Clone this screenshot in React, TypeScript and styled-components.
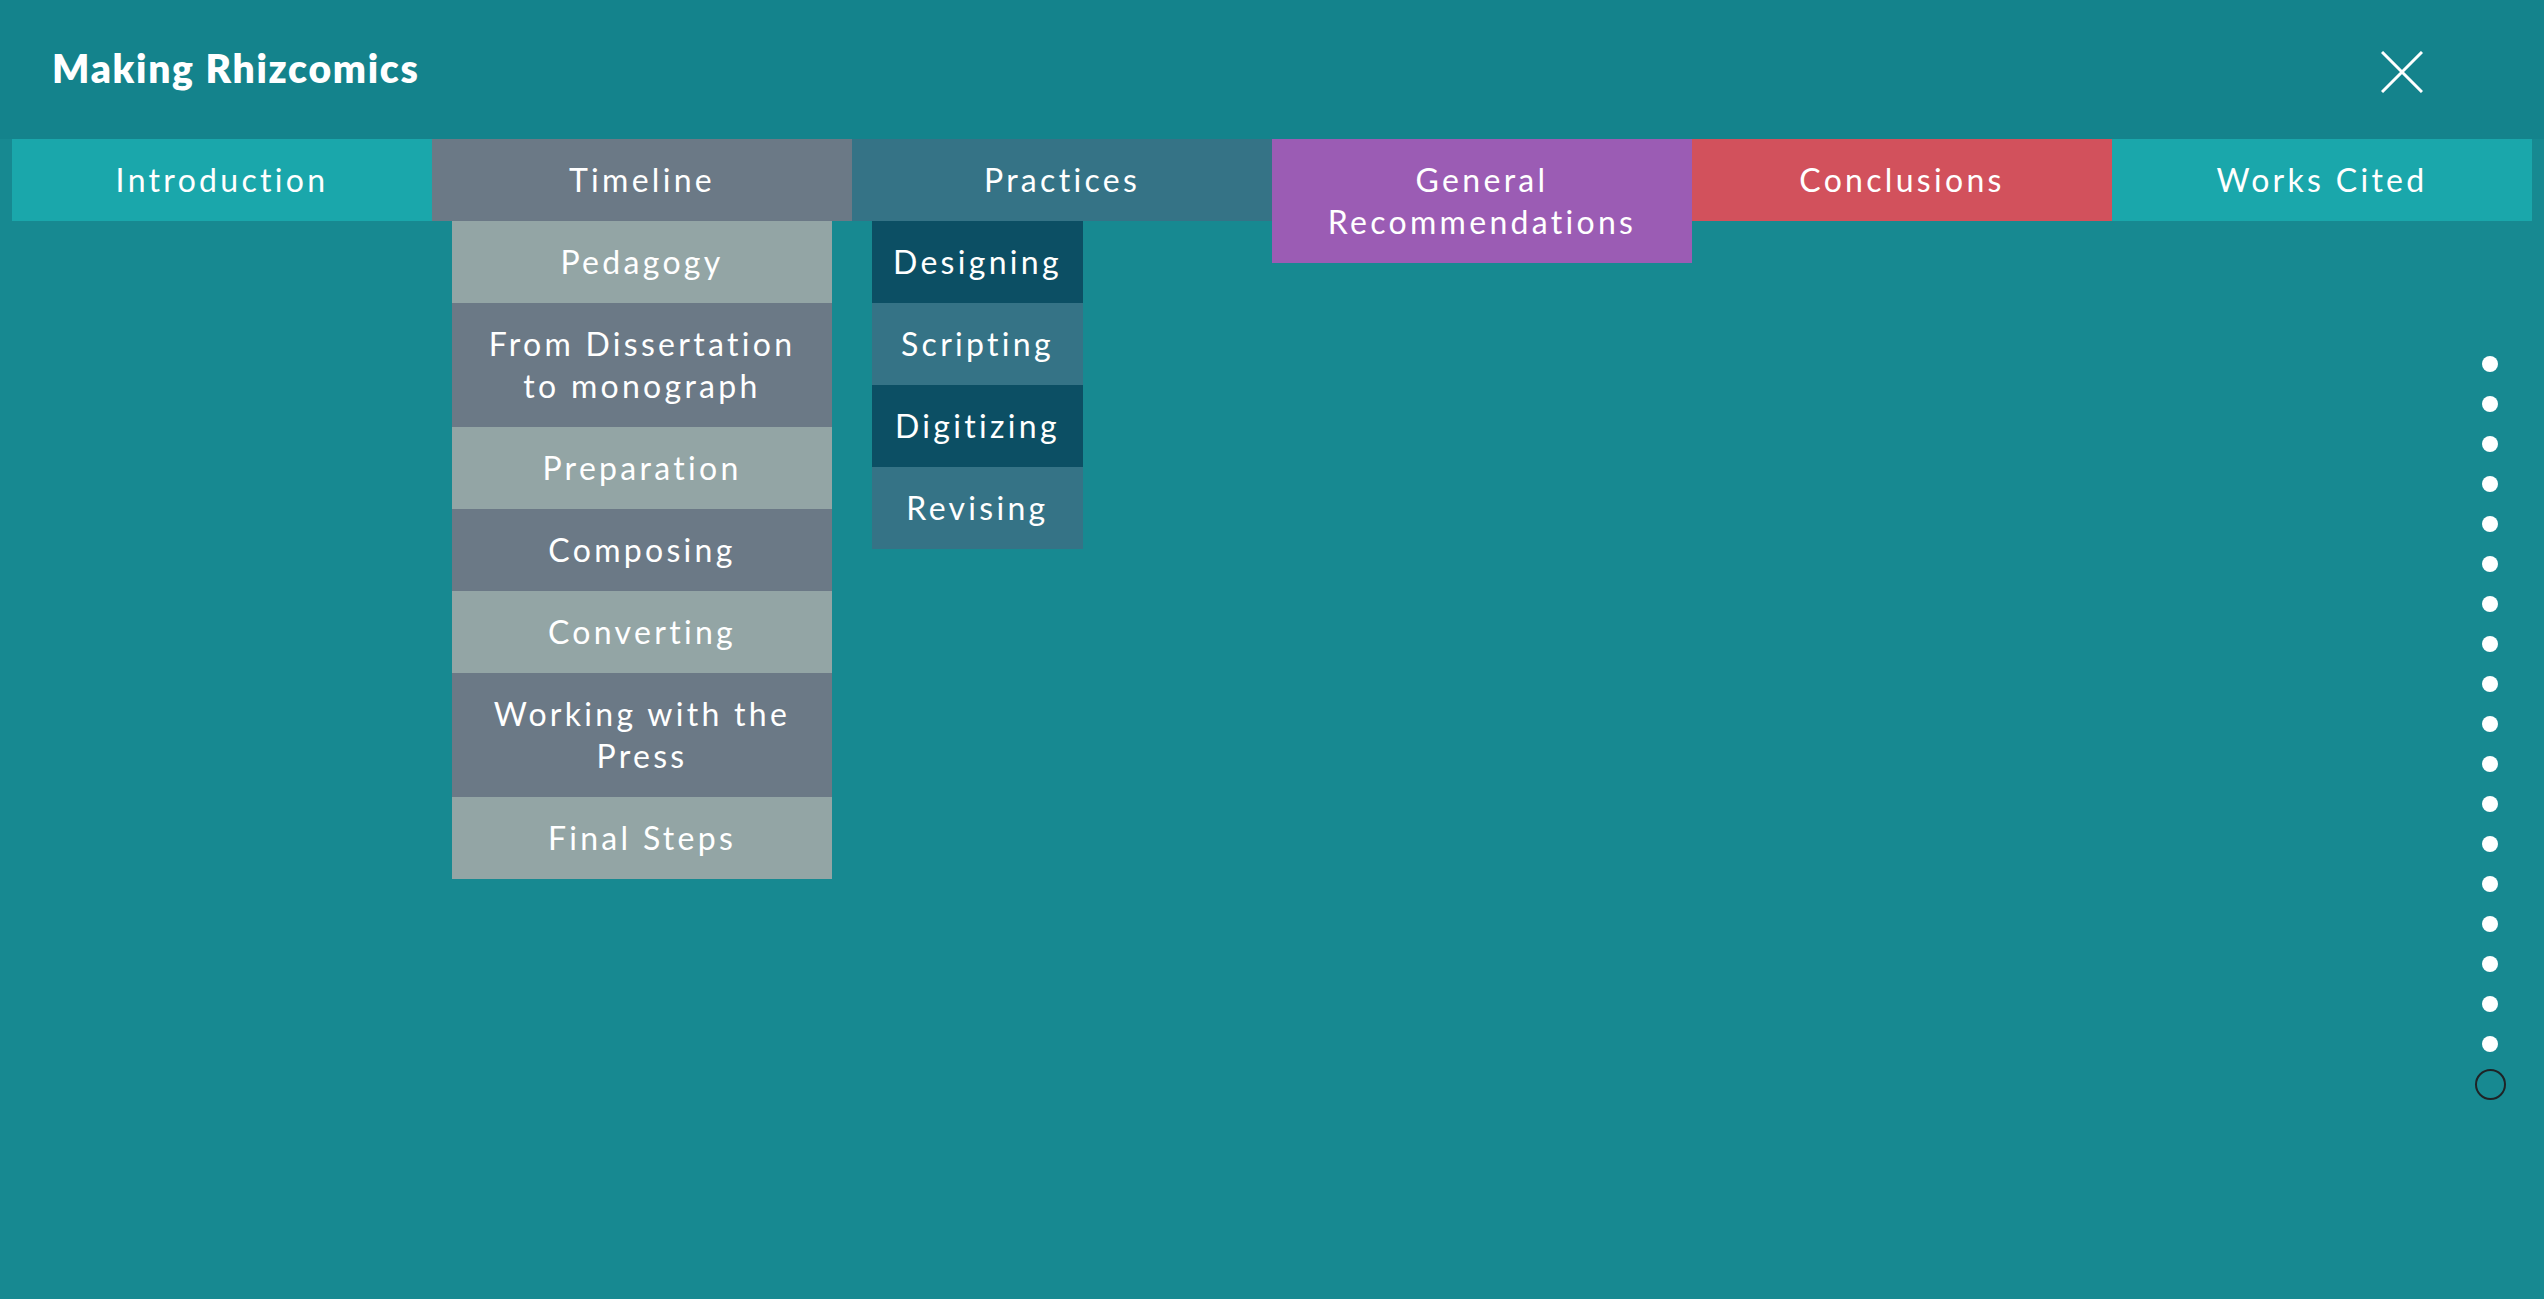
import styled, { createGlobalStyle } from 'styled-components';

const GlobalStyle = createGlobalStyle`
  html, body {
    margin: 0;
    padding: 0;
    background-color: #178991;
  }
  body {
    font-family: Lato, "Open Sans", sans-serif;
    color: #ffffff;
  }
`;

const S = {
  Page: styled.div`
    min-height: 100vh;
    background-color: #178991;
  `,
  Header: styled.header`
    height: 139px;
    background-color: #14838c;
    display: flex;
    align-items: center;
    justify-content: space-between;
    padding: 0 121px 0 52px;
    box-sizing: border-box;
  `,
  Title: styled.h1`
    margin: 0 0 4px;
    font-size: 39px;
    font-weight: 800;
    letter-spacing: 1.7px;
  `,
  Close: styled.button`
    width: 42px;
    height: 42px;
    padding: 0;
    margin-top: 4px;
    border: none;
    background: none;
    cursor: pointer;
    display: flex;
  `,
  Nav: styled.nav`
    display: grid;
    grid-template-columns: repeat(6, 1fr);
    align-items: start;
    padding: 0 12px;
  `,
  Column: styled.div`
    display: flex;
    flex-direction: column;
    align-items: stretch;
  `,
  Tab: styled.a<{ $bg: string }>`
    display: block;
    background-color: ${p => p.$bg};
    padding: 20px;
    font-size: 32px;
    line-height: 42px;
    letter-spacing: 3.3px;
    text-align: center;
    color: #ffffff;
    text-decoration: none;
  `,
  Menu: styled.ul<{ $fit?: boolean }>`
    list-style: none;
    margin: 0 20px;
    padding: 0;
    align-self: ${p => (p.$fit ? 'flex-start' : 'stretch')};
  `,
  MenuItem: styled.li<{ $bg: string }>`
    background-color: ${p => p.$bg};
    padding: 20px 21px;
    font-size: 32px;
    line-height: 42px;
    letter-spacing: 3.3px;
    text-align: center;
    color: #ffffff;
  `,
  Pager: styled.div`
    position: fixed;
    top: 344px;
    right: 38px;
    width: 32px;
    display: flex;
    flex-direction: column;
  `,
  PagerCell: styled.div`
    height: 40px;
    display: flex;
    align-items: center;
    justify-content: center;
  `,
  Dot: styled.span<{ $current?: boolean }>`
    box-sizing: border-box;
    border-radius: 50%;
    width: ${p => (p.$current ? '31px' : '16px')};
    height: ${p => (p.$current ? '31px' : '16px')};
    background-color: ${p => (p.$current ? 'transparent' : '#ffffff')};
    border: ${p => (p.$current ? '2px solid #1f2326' : 'none')};
  `
};

type Sub = { label: string; bg: string };
type Section = { label: string; bg: string; sub?: Sub[]; fit?: boolean };

const light = '#93a5a5';
const slate = '#6b7986';
const deep = '#0c4f64';
const steel = '#357386';

const sections: Section[] = [
  { label: 'Introduction', bg: '#1aa7ab' },
  {
    label: 'Timeline',
    bg: slate,
    sub: [
      { label: 'Pedagogy', bg: light },
      { label: 'From Dissertation to monograph', bg: slate },
      { label: 'Preparation', bg: light },
      { label: 'Composing', bg: slate },
      { label: 'Converting', bg: light },
      { label: 'Working with the Press', bg: slate },
      { label: 'Final Steps', bg: light }
    ]
  },
  {
    label: 'Practices',
    bg: steel,
    fit: true,
    sub: [
      { label: 'Designing', bg: deep },
      { label: 'Scripting', bg: steel },
      { label: 'Digitizing', bg: deep },
      { label: 'Revising', bg: steel }
    ]
  },
  { label: 'General Recommendations', bg: '#9b5cb4' },
  { label: 'Conclusions', bg: '#d2515c' },
  { label: 'Works Cited', bg: '#1aa7ab' }
];

const PAGES = 19;

function App() {
  return (
    <S.Page>
      <GlobalStyle />
      <S.Header>
        <S.Title>Making Rhizcomics</S.Title>
        <S.Close aria-label="Close">
          <svg width="42" height="42" viewBox="0 0 42 42">
            <path d="M1 1 L41 41 M41 1 L1 41" stroke="#ffffff" strokeWidth="3" fill="none" />
          </svg>
        </S.Close>
      </S.Header>
      <S.Nav>
        {sections.map(section => (
          <S.Column key={section.label}>
            <S.Tab href="#" $bg={section.bg}>{section.label}</S.Tab>
            {section.sub && (
              <S.Menu $fit={section.fit}>
                {section.sub.map(item => (
                  <S.MenuItem key={item.label} $bg={item.bg}>{item.label}</S.MenuItem>
                ))}
              </S.Menu>
            )}
          </S.Column>
        ))}
      </S.Nav>
      <S.Pager>
        {Array.from({ length: PAGES }).map((_, i) => (
          <S.PagerCell key={i}>
            <S.Dot $current={i === PAGES - 1} />
          </S.PagerCell>
        ))}
      </S.Pager>
    </S.Page>
  );
}

export default App;
